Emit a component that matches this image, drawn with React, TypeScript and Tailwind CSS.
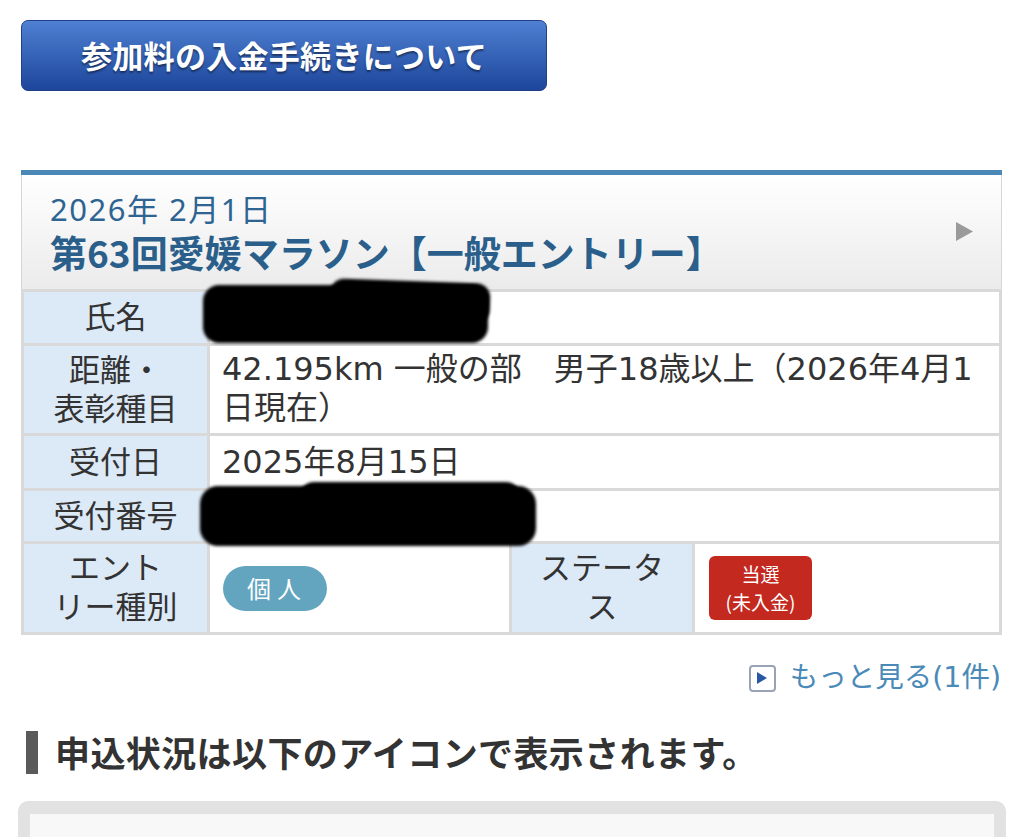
export default function App() {
  const label =
    "bg-[#dce9f6] flex items-center justify-center text-center text-[31px] leading-[39px] text-[#333] py-[4px]";
  const value =
    "bg-white flex items-center pl-[12px] pr-[10px] text-[32px] leading-[39px] text-[#333] py-[4px] min-h-[50px]";
  return (
    <div className="relative w-[1024px] h-[837px] overflow-hidden bg-white font-['DejaVu_Sans','Noto_Sans_CJK_JP',sans-serif]">
      <div className="pt-[20px] pl-[21px]">
        <div className="w-[526px] h-[71px] rounded-[7px] border border-[#21408a] bg-linear-to-b from-[#4f80d2] to-[#1d469b] flex items-center justify-center font-['Noto_Sans_CJK_JP',sans-serif] font-bold text-[31px] tracking-[0.3px] text-white [text-shadow:0_2px_2px_rgba(0,0,0,0.45)]">
          参加料の入金手続きについて
        </div>
      </div>

      <div className="ml-[21px] mt-[79px] w-[981px]">
        <div className="border-t-[5px] border-[#4a88b8]">
          <div className="h-[114px] border-x border-[#d6d6d6] bg-linear-to-b from-[#ffffff] to-[#ebebeb] pl-[28px] pt-[12px] flex items-start justify-between pr-[28px]">
            <div className="font-['Noto_Sans','Noto_Sans_CJK_JP',sans-serif] text-[#2d6491]">
              <div className="text-[31px] leading-[44px] tracking-[1.5px]">2026年 2月1日</div>
              <div className="text-[37px] leading-[42px] font-bold font-['Noto_Sans_CJK_JP',sans-serif] text-[#2b5f8b]">
                第63回愛媛マラソン【一般エントリー】
              </div>
            </div>
            <svg width="17" height="19" viewBox="0 0 17 19" className="mt-[35px]">
              <polygon points="0,0 17,9.5 0,19" fill="#9a9a9a" />
            </svg>
          </div>
          <div className="grid grid-cols-[183px_299px_180px_1fr] gap-[3px] bg-[#d9d9d9] p-[3px]">
            <div className={`${label} min-h-[51px]`}>氏名</div>
            <div className={`${value} col-span-3 min-h-[51px]`}></div>

            <div className={`${label} min-h-[87px]`}>
              距離・
              <br />
              表彰種目
            </div>
            <div className={`${value} col-span-3 min-h-[87px] items-start`}>
              <div>
                42.195km 一般の部　男子18歳以上（2026年4月1
                <br />
                日現在）
              </div>
            </div>

            <div className={`${label} min-h-[52px]`}>受付日</div>
            <div className={`${value} col-span-3 min-h-[52px]`}>2025年8月15日</div>

            <div className={`${label} min-h-[50px]`}>受付番号</div>
            <div className={`${value} col-span-3 min-h-[50px]`}></div>

            <div className={`${label} min-h-[88px]`}>
              エント
              <br />
              リー種別
            </div>
            <div className={`${value} min-h-[88px] pl-[13px]`}>
              <div className="w-[104px] h-[45px] rounded-full bg-[#63a5bf] flex items-center justify-center font-['Noto_Sans_CJK_JP',sans-serif] text-white text-[24px] leading-[30px] tracking-[6px] pl-[4px]">
                個人
              </div>
            </div>
            <div className={`${label} min-h-[88px]`}>
              ステータ
              <br />ス
            </div>
            <div className={`${value} min-h-[88px] pl-[14px]`}>
              <div className="w-[103px] h-[64px] rounded-[6px] bg-[#c3291f] flex flex-col items-center justify-center font-['Noto_Sans_CJK_JP',sans-serif] text-white text-[19px] leading-[28px]">
                <span className="block">当選</span>
                <span className="block">(未入金)</span>
              </div>
            </div>
          </div>
        </div>
      </div>

      <div className="flex justify-end items-center pr-[23px] mt-[25px] gap-[14px]">
        <div className="w-[27px] h-[27px] rounded-[4px] border-2 border-[#9aa3b5] bg-white flex items-center justify-center">
          <svg width="10" height="12" viewBox="0 0 10 12">
            <polygon points="0,0 10,6 0,12" fill="#2a56a6" />
          </svg>
        </div>
        <div className="text-[28.5px] leading-[36px] text-[#4a8ab8]">もっと見る(1件)</div>
      </div>

      <div className="flex items-center ml-[26px] mt-[34px] gap-[17px]">
        <div className="w-[12px] h-[43px] bg-[#5a5a5a]" />
        <div className="font-['Noto_Sans_CJK_JP',sans-serif] font-bold text-[35px] leading-[44px] tracking-[0.4px] text-[#333]">
          申込状況は以下のアイコンで表示されます。
        </div>
      </div>

      <div className="ml-[18px] mt-[27px] w-[988px] h-[120px] rounded-[10px] bg-[#e2e2e2] pt-[13px] px-[12px]">
        <div className="h-full bg-[#f8f8f8]" />
      </div>

      {/* redaction marks */}
      <div className="absolute left-[203px] top-[285px] w-[285px] h-[58px] rounded-[16px] bg-black blur-[1.5px]" />
      <div className="absolute left-[330px] top-[281px] w-[160px] h-[40px] rounded-[14px] bg-black blur-[1.5px] rotate-[2deg]" />
      <div className="absolute left-[200px] top-[486px] w-[336px] h-[60px] rounded-[18px] bg-black blur-[1.5px]" />
      <div className="absolute left-[300px] top-[482px] w-[220px] h-[30px] rounded-[14px] bg-black blur-[1.5px]" />
    </div>
  );
}
